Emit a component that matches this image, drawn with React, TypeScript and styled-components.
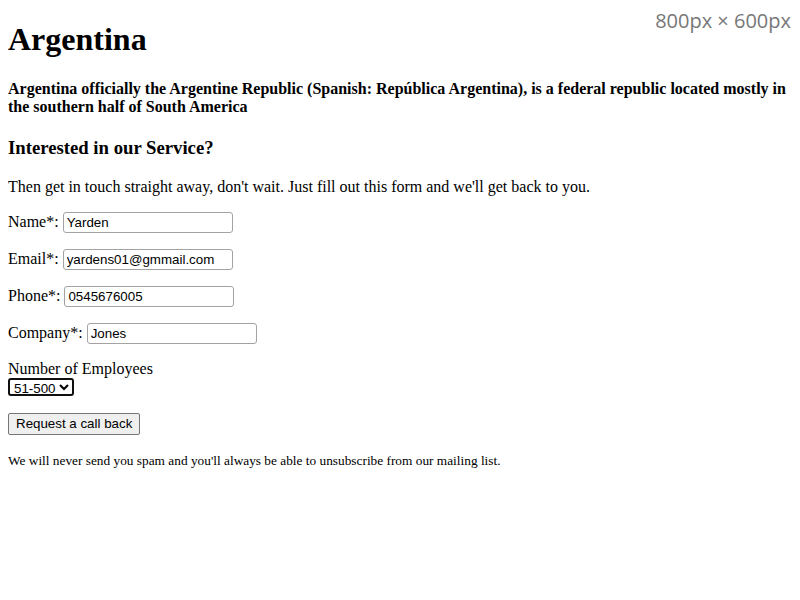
import React from "react";
import styled, { createGlobalStyle } from "styled-components";

const Global = createGlobalStyle`
  body {
    margin: 0 8px 8px 8px;
    font-family: "Liberation Serif", "Times New Roman", serif;
    font-size: 16px;
    color: #000;
    background: #fff;
  }
`;

const Page = styled.div`
  display: block;
`;

const Title = styled.h1`
  font-size: 32px;
  font-weight: bold;
  margin: 21.44px 0;
`;

const Lead = styled.h4`
  font-size: 16px;
  font-weight: bold;
  margin: 21.28px 0;
`;

const SubTitle = styled.h3`
  font-size: 18.72px;
  font-weight: bold;
  margin: 18.72px 0;
`;

const Para = styled.p`
  margin: 16px 0;
`;

const Field = styled.p`
  margin: 16px 0;
`;

const TextInput = styled.input`
  box-sizing: border-box;
  width: 170px;
  height: 21px;
  padding: 1px 3px;
  border: 1px solid #a3a3a3;
  border-radius: 3px;
  font-family: "Liberation Sans", Arial, sans-serif;
  font-size: 13.333px;
  color: #000;
  background: #fff;
`;

const Select = styled.select`
  box-sizing: border-box;
  height: 18px;
  padding: 0;
  border: 2px solid #101010;
  border-radius: 3px;
  font-family: "Liberation Sans", Arial, sans-serif;
  font-size: 13.333px;
  color: #000;
  background: #fff;
`;

const Button = styled.button`
  box-sizing: border-box;
  height: 22px;
  padding: 1px 7px;
  border: 1px solid #767676;
  border-radius: 2px;
  background: #efefef;
  font-family: "Liberation Sans", Arial, sans-serif;
  font-size: 13.333px;
  color: #000;
`;

const Note = styled.p`
  font-size: 13.333px;
  margin: 18px 0 16px 0;
`;

const SizeBadge = styled.div`
  position: absolute;
  top: 7px;
  right: 9px;
  font-family: "Open Sans", "Noto Sans", sans-serif;
  font-size: 20px;
  color: #777777;
`;

export default function App() {
  return (
    <Page>
      <Global />
      <SizeBadge>800px × 600px</SizeBadge>
      <Title>Argentina</Title>
      <Lead>
        Argentina officially the Argentine Republic (Spanish: República Argentina), is a federal
        republic located mostly in the southern half of South America
      </Lead>
      <SubTitle>Interested in our Service?</SubTitle>
      <Para>
        Then get in touch straight away, don't wait. Just fill out this form and we'll get back to
        you.
      </Para>
      <form onSubmit={(e) => e.preventDefault()}>
        <Field>
          <label>Name*: </label>
          <TextInput type="text" defaultValue="Yarden" />
        </Field>
        <Field>
          <label>Email*: </label>
          <TextInput type="email" defaultValue="yardens01@gmmail.com" />
        </Field>
        <Field>
          <label>Phone*: </label>
          <TextInput type="tel" defaultValue="0545676005" />
        </Field>
        <Field>
          <label>Company*: </label>
          <TextInput type="text" defaultValue="Jones" />
        </Field>
        <Field>
          <label>Number of Employees</label>
          <br />
          <Select defaultValue="51-500">
            <option>1-10</option>
            <option>11-50</option>
            <option>51-500</option>
            <option>500+</option>
          </Select>
        </Field>
        <Field>
          <Button type="submit">Request a call back</Button>
        </Field>
      </form>
      <Note>We will never send you spam and you'll always be able to unsubscribe from our mailing list.</Note>
    </Page>
  );
}
